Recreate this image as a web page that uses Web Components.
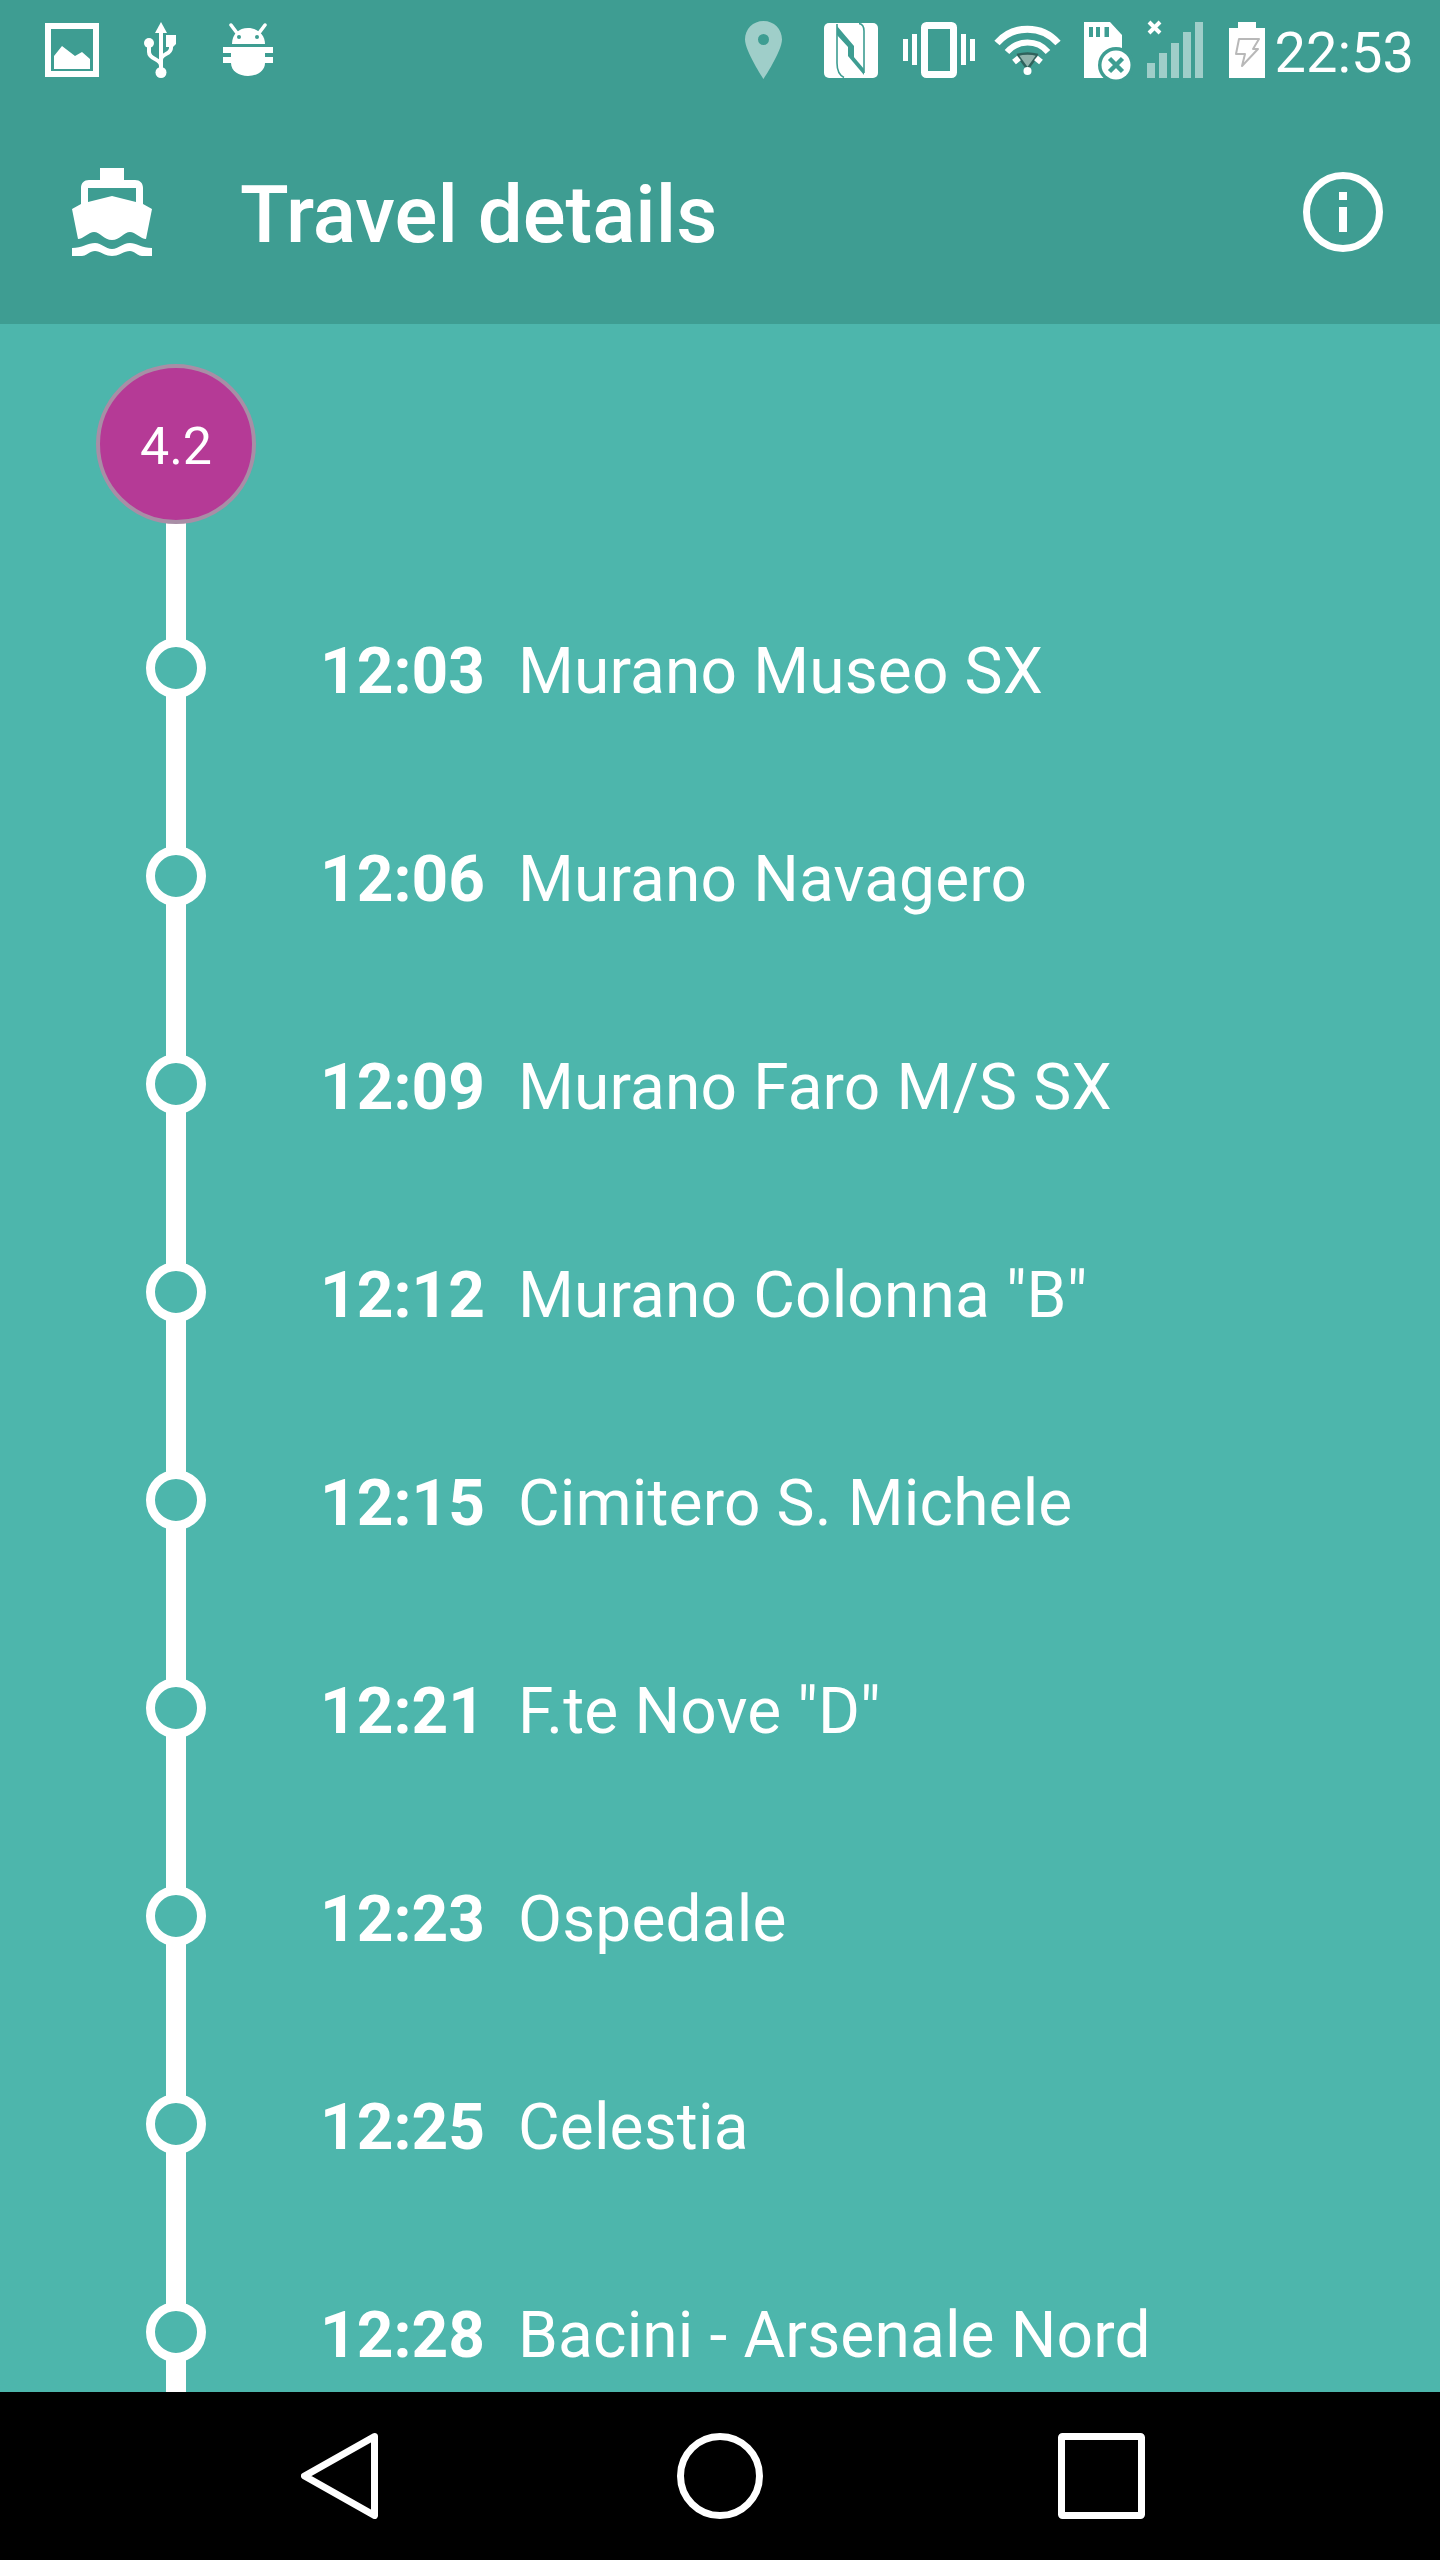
<!DOCTYPE html>
<html>
<head>
<meta charset="utf-8">
<title>Travel details</title>
<style>
  html, body { margin: 0; padding: 0; }
  body { width: 1440px; height: 2560px; overflow: hidden; font-family: Roboto, "Liberation Sans", sans-serif; }
</style>
</head>
<body>
<travel-app>
  <status-bar slot="status" time="22:53"></status-bar>
  <app-toolbar slot="toolbar">Travel details</app-toolbar>
  <stop-list slot="content" line="4.2">
    <stop-row time="12:03">Murano Museo SX</stop-row>
    <stop-row time="12:06">Murano Navagero</stop-row>
    <stop-row time="12:09">Murano Faro M/S SX</stop-row>
    <stop-row time="12:12">Murano Colonna "B"</stop-row>
    <stop-row time="12:15">Cimitero S. Michele</stop-row>
    <stop-row time="12:21">F.te Nove "D"</stop-row>
    <stop-row time="12:23">Ospedale</stop-row>
    <stop-row time="12:25">Celestia</stop-row>
    <stop-row time="12:28">Bacini - Arsenale Nord</stop-row>
  </stop-list>
  <nav-bar slot="nav"></nav-bar>
</travel-app>

<script>
class TravelApp extends HTMLElement {
  constructor() {
    super();
    this.attachShadow({ mode: "open" });
  }

  connectedCallback() {
    this.shadowRoot.innerHTML = `
      <style>
        :host {
          display: flex;
          flex-direction: column;
          width: 1440px;
          height: 2560px;
          background-color: #4db6ac;
          color: #fff;
        }
        header { background-color: #3e9d92; }
        main { flex: 1; min-height: 0; overflow: hidden; }
      </style>
      <header>
        <slot name="status"></slot>
        <slot name="toolbar"></slot>
      </header>
      <main><slot name="content"></slot></main>
      <slot name="nav"></slot>
    `;
  }
}

class StatusBar extends HTMLElement {
  constructor() {
    super();
    this.attachShadow({ mode: "open" });
  }

  connectedCallback() {
    const teal = "#3e9d92";
    this.shadowRoot.innerHTML = `
      <style>
        :host {
          display: flex;
          align-items: center;
          height: 100px;
          padding: 0 26px 0 45px;
          box-sizing: border-box;
          font-size: 56px;
        }
        svg { display: block; flex: none; overflow: visible; }
        .left { display: flex; align-items: center; gap: 45px; flex: 1; }
        .right { display: flex; align-items: center; }
        .time { margin-left: 10px; line-height: 56px; padding-top: 6px; }
      </style>
      <div class="left">
        <svg width="54" height="54" viewBox="0 0 54 54">
          <rect x="3" y="3" width="48" height="48" fill="none" stroke="#fff" stroke-width="6"/>
          <path d="M9 46V33L17 23 30 33 37 29 45 36V46Z" fill="#fff"/>
        </svg>
        <svg width="32" height="56" viewBox="0 0 32 56" style="margin-right:2px">
          <path d="M17 0 23 11H11Z" fill="#fff"/>
          <path d="M17 9V50M5 21V30C5 38 17 36 17 44M27 22V26C27 33 17 31 17 38" fill="none" stroke="#fff" stroke-width="4"/>
          <circle cx="17" cy="50.5" r="5.5" fill="#fff"/>
          <circle cx="5" cy="21" r="5" fill="#fff"/>
          <path d="M22 13H32V22L29 25H22Z" fill="#fff"/>
        </svg>
        <svg width="50" height="52" viewBox="0 0 50 52">
          <path d="M8 1 14 9M42 1 36 9" stroke="#fff" stroke-width="3.5" stroke-linecap="round"/>
          <path d="M9 20C9 10 16 4 25 4S42 10 42 20Z" fill="#fff"/>
          <circle cx="16" cy="13" r="2" fill="${teal}"/>
          <circle cx="34" cy="13" r="2" fill="${teal}"/>
          <path d="M0 23H50V29H42V33H50V39H42C42 47 34 52 25 52S8 47 8 39H0V33H8V29H0Z" fill="#fff"/>
        </svg>
      </div>
      <div class="right">
        <svg width="37" height="58" viewBox="0 0 37 58" style="margin-right:42px">
          <path fill-rule="evenodd" opacity=".5" fill="#fff" d="M18.5 0C8 0 0 8 0 18.5 0 30 18.5 58 18.5 58S37 30 37 18.5C37 8 29 0 18.5 0ZM18.5 13A5.5 5.5 0 1 1 18.5 24 5.5 5.5 0 0 1 18.5 13Z"/>
        </svg>
        <svg width="54" height="55" viewBox="0 0 54 55" style="margin-right:25px">
          <rect width="54" height="55" rx="5" fill="#fff"/>
          <path d="M13 1V40C13 47 15 52 20 54.500M35 .5C38 1 40 4 40 8V50" fill="none" stroke="${teal}" stroke-width="1.600"/>
          <path d="M13 3 30 23V36L24 30V24L13 12Z" fill="${teal}"/>
          <path d="M24 27 40 46V52L24 33Z" fill="${teal}"/>
        </svg>
        <svg width="72" height="56" viewBox="0 0 72 56" style="margin-right:19px">
          <rect x="21.5" y="3.5" width="29" height="49" rx="2" fill="none" stroke="#fff" stroke-width="7"/>
          <path d="M0 17H5V39H0ZM9 12H14V43H9ZM58 12H63V43H58ZM67 17H72V39H67Z" fill="#fff"/>
        </svg>
        <svg width="67" height="49" viewBox="0 0 67 49" style="margin-right:23px">
          <path d="M3 17A40.500 40.500 0 0 1 64 17" fill="none" stroke="#fff" stroke-width="7"/>
          <path d="M13 26A27 27 0 0 1 54 26" fill="none" stroke="#fff" stroke-width="6"/>
          <path d="M23 29Q33.500 26 44 29L33.500 43Z" fill="#8fb2ab"/>
          <path d="M23 29Q33.500 26 44 29M24 30 33.500 43 43 30" fill="none" stroke="#2f625c" stroke-width="2.500"/>
          <path d="M20 36 25 32M47 36 42 32" stroke="#fff" stroke-width="6"/>
          <circle cx="33.500" cy="45" r="4" fill="#fff"/>
        </svg>
        <svg width="46" height="56" viewBox="0 0 46 56" style="margin-right:17px">
          <path d="M0 0H26L38 13V56H0Z" fill="#fff"/>
          <path d="M5 5H9V15H5ZM12 5H16V15H12ZM20.500 5H25V15H20.500Z" fill="${teal}"/>
          <circle cx="32" cy="43" r="18" fill="${teal}"/>
          <circle cx="32" cy="43" r="14.500" fill="#fff"/>
          <path d="M25.500 36.500 38.500 49.500M38.500 36.500 25.500 49.500" stroke="${teal}" stroke-width="4.500"/>
        </svg>
        <svg width="56" height="56" viewBox="0 0 56 56" style="margin-right:26px">
          <path d="M2 0 13 11M13 0 2 11" stroke="#fff" stroke-width="4"/>
          <path d="M0 41H8V56H0ZM12 31H20V56H12ZM24 21H32V56H24ZM36 10H44V56H36ZM48 0H56V56H48Z" fill="#fff" opacity=".5"/>
        </svg>
        <svg width="36" height="56" viewBox="0 0 36 56">
          <path d="M9 0H27V6H36V56H0V6H9Z" fill="#fff"/>
          <path d="M10 17H30L24 27H29L13 44 16 32H7Z" fill="#fff" stroke="#b8b8b8" stroke-width="2" stroke-linejoin="round"/>
        </svg>
        <span class="time">${this.getAttribute("time")}</span>
      </div>
    `;
  }
}

class AppToolbar extends HTMLElement {
  constructor() {
    super();
    this.attachShadow({ mode: "open" });
  }

  connectedCallback() {
    this.shadowRoot.innerHTML = `
      <style>
        :host {
          display: flex;
          align-items: center;
          height: 224px;
          padding: 0 57px 0 72px;
          box-sizing: border-box;
        }
        svg { display: block; flex: none; }
        .title {
          flex: 1;
          margin-left: 88px;
          padding-top: 6px;
          font-size: 80px;
          font-weight: 500;
          line-height: 94px;
        }
      </style>
      <svg width="80" height="88" viewBox="0 0 80 88">
        <path fill="#fff" fill-rule="evenodd" d="M28 0H52V12H63C68 12 71 15 71 20V36L80 41 74 71C69 71 63 64 58 64 52 64 48 72 40 72 32 72 28 64 22 64 17 64 11 71 6 71L0 41 9 36V20C9 15 12 12 17 12H28ZM16 20V34L40 28 64 34V20Z"/>
        <path fill="#fff" d="M0 80C10 80 16 75 23 75 30 75 33 81 40 81 47 81 50 75 58 75 64 75 70 80 80 80V88H70C66 88 62 83 58 83 52 83 47 88 40 88 33 88 28 83 23 83 18 83 14 88 10 88H0Z"/>
      </svg>
      <div class="title"><slot></slot></div>
      <svg width="80" height="80" viewBox="0 0 80 80">
        <circle cx="40" cy="40" r="36.500" fill="none" stroke="#fff" stroke-width="7"/>
        <path d="M36 20H44V28H36ZM36 35H44V60H36Z" fill="#fff"/>
      </svg>
    `;
  }
}

class StopList extends HTMLElement {
  constructor() {
    super();
    this.attachShadow({ mode: "open" });
  }

  connectedCallback() {
    this.shadowRoot.innerHTML = `
      <style>
        :host {
          display: block;
          padding-top: 40px;
          background: linear-gradient(#fff, #fff) 166px 120px / 20px 100% no-repeat;
        }
        .badge {
          display: flex;
          align-items: center;
          justify-content: center;
          box-sizing: border-box;
          width: 160px;
          height: 160px;
          margin: 0 0 40px 96px;
          padding-top: 5px;
          border-radius: 50%;
          border: 4px solid #a88ea6;
          background-color: #b53a96;
          font-size: 52px;
        }
      </style>
      <div class="badge">${this.getAttribute("line")}</div>
      <slot></slot>
    `;
  }
}

class StopRow extends HTMLElement {
  constructor() {
    super();
    this.attachShadow({ mode: "open" });
  }

  connectedCallback() {
    this.shadowRoot.innerHTML = `
      <style>
        :host {
          display: flex;
          align-items: center;
          height: 208px;
          font-size: 64px;
          line-height: 76px;
        }
        .ring {
          flex: none;
          box-sizing: border-box;
          width: 60px;
          height: 60px;
          margin: 0 114px 0 146px;
          border: 9px solid #fff;
          border-radius: 50%;
          background-color: #4db6ac;
        }
        .time, .name { padding-top: 8px; }
        .name { letter-spacing: .15px; white-space: nowrap; }
        .time { flex: none; width: 198px; font-weight: 700; }
      </style>
      <div class="ring"></div>
      <div class="time">${this.getAttribute("time")}</div>
      <div class="name"><slot></slot></div>
    `;
  }
}

class NavBar extends HTMLElement {
  constructor() {
    super();
    this.attachShadow({ mode: "open" });
  }

  connectedCallback() {
    this.shadowRoot.innerHTML = `
      <style>
        :host {
          display: grid;
          grid-template-columns: repeat(3, 381px);
          justify-content: center;
          justify-items: center;
          align-items: center;
          flex: none;
          height: 168px;
          background-color: #000;
        }
        svg { display: block; }
      </style>
      <svg width="77" height="86" viewBox="0 0 77 86">
        <path d="M73.500 3.500 3.500 43 73.500 82.500Z" fill="none" stroke="#fff" stroke-width="7" stroke-linejoin="round"/>
      </svg>
      <svg width="86" height="86" viewBox="0 0 86 86">
        <circle cx="43" cy="43" r="39.500" fill="none" stroke="#fff" stroke-width="7"/>
      </svg>
      <svg width="87" height="86" viewBox="0 0 87 86">
        <rect x="3.500" y="3.500" width="80" height="79" rx="1" fill="none" stroke="#fff" stroke-width="7"/>
      </svg>
    `;
  }
}

customElements.define("travel-app", TravelApp);
customElements.define("status-bar", StatusBar);
customElements.define("app-toolbar", AppToolbar);
customElements.define("stop-list", StopList);
customElements.define("stop-row", StopRow);
customElements.define("nav-bar", NavBar);
</script>
</body>
</html>
